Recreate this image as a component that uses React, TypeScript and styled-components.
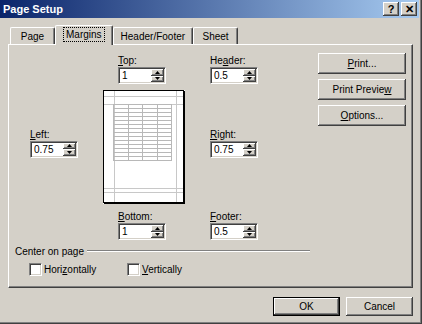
import React from "react";
import styled, { createGlobalStyle } from "styled-components";

const Global = createGlobalStyle`
  html, body { margin: 0; padding: 0; background: #d4d0c8; }
  body {
    font-family: "Liberation Sans", Arial, sans-serif;
    font-size: 10px;
    color: #000;
  }
  u { text-decoration: underline; text-underline-offset: 1px; }
`;

const Window = styled.div`
  width: 422px;
  height: 324px;
  box-sizing: border-box;
  background: #d4d0c8;
  display: flex;
  flex-direction: column;
  padding: 0 3px 3px 0;
  box-shadow: inset -1px -1px #404040, inset -2px -2px #808080;
`;

const TitleBar = styled.div`
  height: 18px;
  flex: none;
  display: flex;
  align-items: center;
  padding: 0 2px 0 3px;
  background: linear-gradient(to right, #0a246a, #a6caf0);
  color: #fff;
  font-size: 11px;
  font-weight: bold;
`;

const TitleText = styled.span`
  flex: 1;
`;

const TitleButtons = styled.div`
  display: flex;
  gap: 2px;
`;

const TitleButton = styled.div`
  width: 16px;
  height: 14px;
  box-sizing: border-box;
  background: #d4d0c8;
  color: #000;
  display: flex;
  align-items: center;
  justify-content: center;
  font-size: 11px;
  font-weight: bold;
  box-shadow: inset -1px -1px #404040, inset 1px 1px #fff, inset -2px -2px #808080;
`;

const Body = styled.div`
  flex: 1;
  display: flex;
  flex-direction: column;
  padding: 7px 6px 0 8px;
`;

const TabStrip = styled.div`
  display: flex;
  align-items: flex-end;
  height: 19px;
  padding-left: 2px;
`;

const Tab = styled.div<{ $active?: boolean }>`
  box-sizing: border-box;
  height: ${(p) => (p.$active ? 20 : 17)}px;
  margin-bottom: ${(p) => (p.$active ? -1 : 0)}px;
  min-width: 45px;
  padding: 0 ${(p) => (p.$active ? 9 : 7)}px;
  display: flex;
  align-items: center;
  justify-content: center;
  background: #d4d0c8;
  border-top: 1px solid #fff;
  border-left: 1px solid #fff;
  border-right: 1px solid #404040;
  border-radius: 2px 2px 0 0;
  box-shadow: inset -1px 0 #808080;
  position: relative;
  z-index: ${(p) => (p.$active ? 2 : 1)};
  padding-bottom: ${(p) => (p.$active ? 2 : 0)}px;
`;

const Focus = styled.span`
  outline: 1px dotted #000;
  outline-offset: 1px;
  padding: 0 1px;
`;

const Panel = styled.div`
  box-sizing: border-box;
  width: 405px;
  height: 244px;
  border-top: 1px solid #fff;
  border-left: 1px solid #fff;
  border-right: 1px solid #404040;
  border-bottom: 1px solid #404040;
  box-shadow: inset -1px -1px #808080;
  padding: 10px 0 0 6px;
  display: flex;
  flex-direction: column;
`;

const MarginGrid = styled.div`
  margin-left: 15px;
  display: grid;
  grid-template-columns: 48px 25px 83px 24px 50px 58px 88px;
  grid-template-rows: auto 1fr auto;
  row-gap: 6px;
`;

const Field = styled.div<{ $col: number; $row: number; $center?: boolean; $indent?: number }>`
  grid-column: ${(p) => p.$col};
  grid-row: ${(p) => p.$row};
  align-self: ${(p) => (p.$center ? "center" : "start")};
  margin-left: ${(p) => p.$indent || 0}px;
  margin-bottom: ${(p) => (p.$center ? 9 : 0)}px;
  display: flex;
  flex-direction: column;
`;

const Label = styled.div`
  height: 12px;
  line-height: 12px;
  white-space: nowrap;
`;

const SpinBox = styled.div`
  width: 48px;
  height: 17px;
  box-sizing: border-box;
  background: #fff;
  border-top: 1px solid #808080;
  border-left: 1px solid #808080;
  border-right: 1px solid #fff;
  border-bottom: 1px solid #fff;
  box-shadow: inset 1px 1px #404040, inset -1px -1px #d4d0c8;
  padding: 1px;
  display: flex;
`;

const SpinValue = styled.div`
  flex: 1;
  padding-left: 2px;
  line-height: 13px;
`;

const SpinButtons = styled.div`
  width: 13px;
  display: flex;
  flex-direction: column;
`;

const SpinButton = styled.div`
  flex: 1;
  background: #d4d0c8;
  box-shadow: inset -1px -1px #404040, inset 1px 1px #fff, inset -2px -2px #808080;
  display: flex;
  align-items: center;
  justify-content: center;
`;

const Preview = styled.svg`
  grid-column: 3;
  grid-row: 2;
  display: block;
`;

const ButtonColumn = styled.div`
  grid-column: 7;
  grid-row: 1 / span 3;
  align-self: start;
  margin-top: -2px;
  display: flex;
  flex-direction: column;
  gap: 5px;
`;

const Button = styled.div<{ $w?: number; $h?: number; $default?: boolean }>`
  box-sizing: border-box;
  width: ${(p) => p.$w || 88}px;
  height: ${(p) => p.$h || 21}px;
  background: #d4d0c8;
  display: flex;
  align-items: center;
  justify-content: center;
  border: ${(p) => (p.$default ? "1px solid #000" : "0")};
  box-shadow: inset -1px -1px #404040, inset 1px 1px #fff, inset -2px -2px #808080;
`;

const Group = styled.div`
  margin-top: 5px;
  width: 295px;
  display: flex;
  flex-direction: column;
`;

const Legend = styled.div`
  display: flex;
  align-items: center;
  height: 12px;
`;

const LegendLine = styled.div`
  flex: 1;
  margin-left: 3px;
  border-top: 1px solid #808080;
  border-bottom: 1px solid #fff;
`;

const CheckRow = styled.div`
  display: flex;
  margin-top: 6px;
  padding-left: 14px;
`;

const CheckItem = styled.div`
  width: 98px;
  display: flex;
  align-items: center;
  gap: 2px;
`;

const CheckBox = styled.div`
  width: 13px;
  height: 13px;
  box-sizing: border-box;
  background: #fff;
  border-top: 1px solid #808080;
  border-left: 1px solid #808080;
  border-right: 1px solid #fff;
  border-bottom: 1px solid #fff;
  box-shadow: inset 1px 1px #404040, inset -1px -1px #d4d0c8;
`;

const Footer = styled.div`
  display: flex;
  justify-content: flex-end;
  gap: 6px;
  margin-top: 9px;
`;

const Arrow = ({ up }: { up?: boolean }) => (
  <svg width="5" height="3" viewBox="0 0 5 3">
    <polygon points={up ? "2.5,0 5,3 0,3" : "0,0 5,0 2.5,3"} fill="#000" />
  </svg>
);

const Spin = ({ value }: { value: string }) => (
  <SpinBox>
    <SpinValue>{value}</SpinValue>
    <SpinButtons>
      <SpinButton>
        <Arrow up />
      </SpinButton>
      <SpinButton>
        <Arrow />
      </SpinButton>
    </SpinButtons>
  </SpinBox>
);

const PagePicture = () => {
  const rows: number[] = [];
  for (let y = 14; y <= 70; y += 4) rows.push(y);
  return (
    <Preview width="83" height="115" viewBox="0 0 83 115">
      <rect x="0" y="0" width="82" height="114" fill="#fff" />
      <g stroke="#c8c8c8" strokeWidth="1">
        <line x1="11.5" y1="1" x2="11.5" y2="113" />
        <line x1="73.5" y1="1" x2="73.5" y2="113" />
        <line x1="1" y1="6.5" x2="81" y2="6.5" />
        <line x1="1" y1="14.5" x2="81" y2="14.5" />
        <line x1="1" y1="98.5" x2="81" y2="98.5" />
        <line x1="1" y1="102.5" x2="81" y2="102.5" />
      </g>
      <g stroke="#b8b8b8" strokeWidth="1">
        {rows.map((y) => (
          <line key={y} x1="10" y1={y + 0.5} x2="69" y2={y + 0.5} />
        ))}
        {[10, 25, 39, 54, 68].map((x) => (
          <line key={x} x1={x + 0.5} y1="14" x2={x + 0.5} y2="71" />
        ))}
      </g>
      <rect x="0.5" y="0.5" width="80" height="112" fill="none" stroke="#000" />
      <line x1="81.5" y1="1" x2="81.5" y2="114" stroke="#000" />
      <line x1="1" y1="113.5" x2="82" y2="113.5" stroke="#000" />
    </Preview>
  );
};

export default function App() {
  return (
    <>
      <Global />
      <Window>
        <TitleBar>
          <TitleText>Page Setup</TitleText>
          <TitleButtons>
            <TitleButton>?</TitleButton>
            <TitleButton>✕</TitleButton>
          </TitleButtons>
        </TitleBar>
        <Body>
          <TabStrip>
            <Tab>Page</Tab>
            <Tab $active>
              <Focus>Margins</Focus>
            </Tab>
            <Tab>Header/Footer</Tab>
            <Tab>Sheet</Tab>
          </TabStrip>
          <Panel>
            <MarginGrid>
              <Field $col={3} $row={1} $indent={15}>
                <Label>
                  <u>T</u>op:
                </Label>
                <Spin value="1" />
              </Field>
              <Field $col={5} $row={1}>
                <Label>
                  He<u>a</u>der:
                </Label>
                <Spin value="0.5" />
              </Field>
              <Field $col={1} $row={2} $center>
                <Label>
                  <u>L</u>eft:
                </Label>
                <Spin value="0.75" />
              </Field>
              <PagePicture />
              <Field $col={5} $row={2} $center>
                <Label>
                  <u>R</u>ight:
                </Label>
                <Spin value="0.75" />
              </Field>
              <Field $col={3} $row={3} $indent={15}>
                <Label>
                  <u>B</u>ottom:
                </Label>
                <Spin value="1" />
              </Field>
              <Field $col={5} $row={3}>
                <Label>
                  <u>F</u>ooter:
                </Label>
                <Spin value="0.5" />
              </Field>
              <ButtonColumn>
                <Button>
                  <span>
                    <u>P</u>rint...
                  </span>
                </Button>
                <Button>
                  <span>
                    Print Previe<u>w</u>
                  </span>
                </Button>
                <Button>
                  <span>
                    <u>O</u>ptions...
                  </span>
                </Button>
              </ButtonColumn>
            </MarginGrid>
            <Group>
              <Legend>
                <span>Center on page</span>
                <LegendLine />
              </Legend>
              <CheckRow>
                <CheckItem>
                  <CheckBox />
                  <span>
                    Hori<u>z</u>ontally
                  </span>
                </CheckItem>
                <CheckItem>
                  <CheckBox />
                  <span>
                    <u>V</u>ertically
                  </span>
                </CheckItem>
              </CheckRow>
            </Group>
          </Panel>
          <Footer>
            <Button $w={67} $h={19} $default>
              OK
            </Button>
            <Button $w={67} $h={19}>
              Cancel
            </Button>
          </Footer>
        </Body>
      </Window>
    </>
  );
}
